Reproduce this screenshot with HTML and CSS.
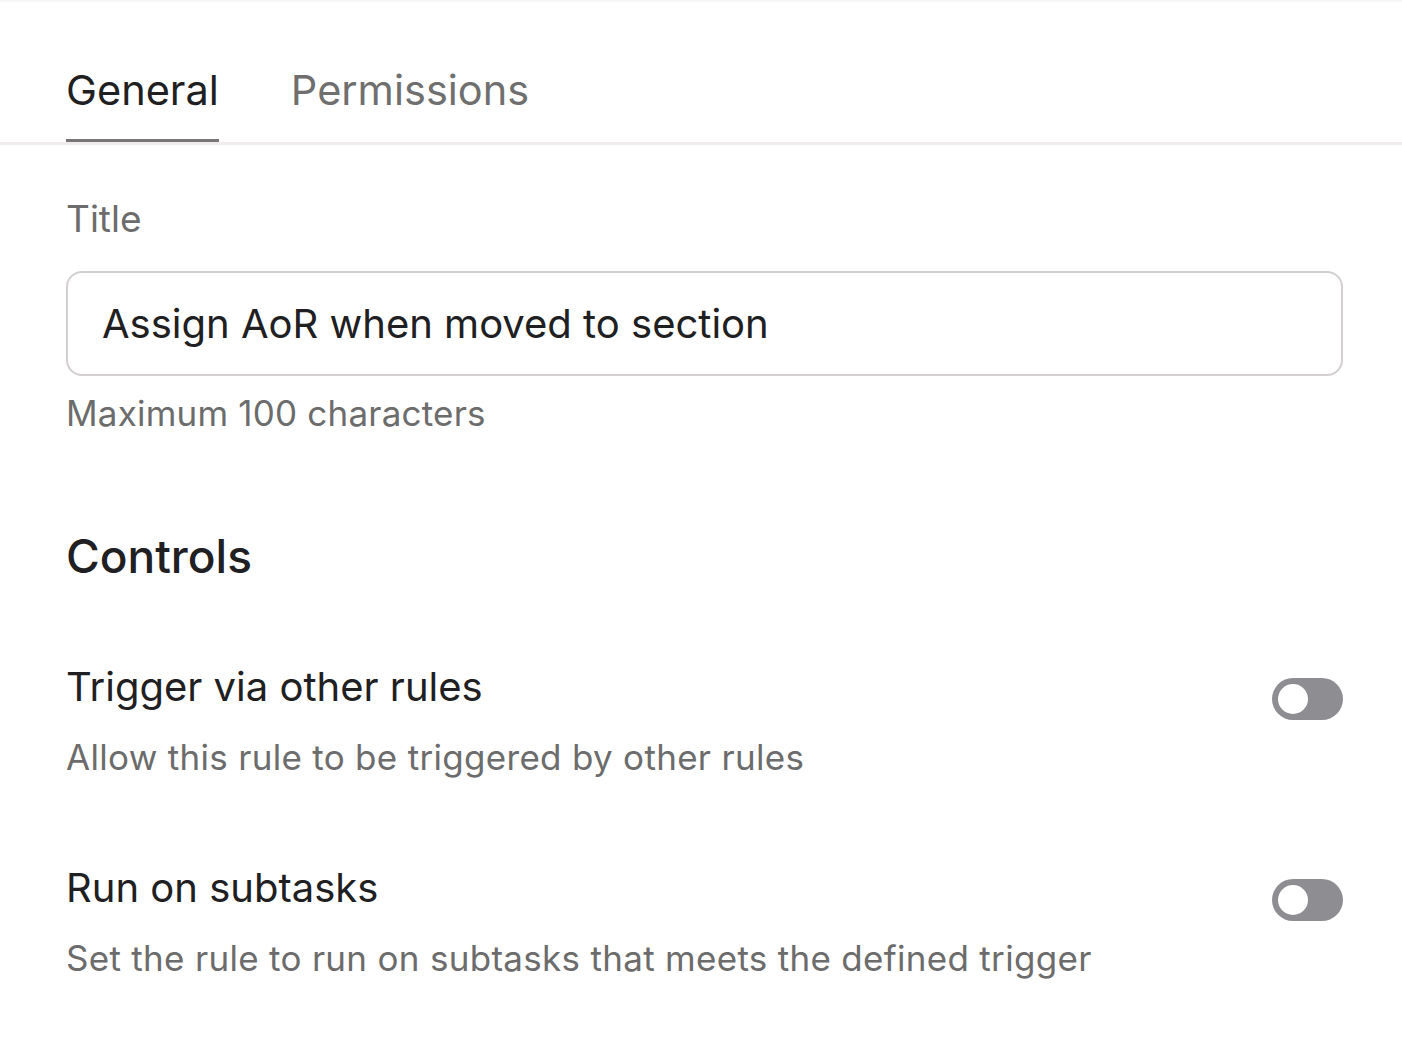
FILE: index.html
```html
<!DOCTYPE html>
<html>
<head>
<meta charset="utf-8">
<link rel="stylesheet" href="styles.css">
</head>
<body>
<div class="topline"></div>
<nav class="tabs">
  <div class="tab active">General</div>
  <div class="tab">Permissions</div>
</nav>
<main class="content">
  <section class="field">
    <label class="label">Title</label>
    <div class="input">Assign AoR when moved to section</div>
    <div class="hint">Maximum 100 characters</div>
  </section>
  <h2 class="heading">Controls</h2>
  <div class="control">
    <div class="control-text">
      <div class="control-title">Trigger via other rules</div>
      <div class="control-desc">Allow this rule to be triggered by other rules</div>
    </div>
    <div class="toggle"><span class="knob"></span></div>
  </div>
  <div class="control">
    <div class="control-text">
      <div class="control-title">Run on subtasks</div>
      <div class="control-desc">Set the rule to run on subtasks that meets the defined trigger</div>
    </div>
    <div class="toggle"><span class="knob"></span></div>
  </div>
</main>
</body>
</html>
```
FILE: styles.css
```css
* { box-sizing: border-box; }
body {
  margin: 0;
  background: #ffffff;
  font-family: "Inter", "Noto Sans", sans-serif;
  color: #202022;
}
.topline {
  height: 2px;
  background: #f6f6f6;
}
.tabs {
  display: flex;
  gap: 72px;
  padding: 0 66px;
  margin-top: 63px;
  border-bottom: 3px solid #efebeb;
}
.tab {
  font-size: 41.5px;
  line-height: 50px;
  padding-bottom: 24px;
  color: #6f6f6f;
  border-bottom: 3px solid transparent;
}
.tab.active {
  color: #202022;
  border-bottom-color: #767676;
}
.content {
  padding: 0 59px 0 66px;
}
.field {
  display: flex;
  flex-direction: column;
  padding-top: 52px;
}
.label {
  font-size: 37px;
  line-height: 44px;
  color: #6c6c6c;
}
.input {
  margin-top: 30px;
  height: 105px;
  border: 2px solid #d3cfcf;
  border-radius: 16px;
  padding: 0 34px;
  display: flex;
  align-items: center;
  font-size: 40px;
  line-height: 48px;
}
.hint {
  margin-top: 16px;
  font-size: 35px;
  line-height: 42px;
  letter-spacing: 0.2px;
  color: #6c6c6c;
}
.heading {
  margin: 95px 0 0;
  font-size: 46px;
  line-height: 54px;
  font-weight: 500;
}
.control {
  display: flex;
  align-items: flex-start;
  justify-content: space-between;
  margin-top: 80px;
}
.control + .control {
  margin-top: 86px;
}
.control-title {
  font-size: 40px;
  line-height: 48px;
}
.control-desc {
  margin-top: 25px;
  font-size: 35px;
  line-height: 42px;
  letter-spacing: 0.3px;
  color: #6c6c6c;
}
.toggle {
  flex: none;
  width: 71px;
  height: 42px;
  border-radius: 21px;
  background: #8e8d92;
  margin-top: 15px;
  padding: 6px;
  display: flex;
  align-items: center;
}
.knob {
  width: 30px;
  height: 30px;
  border-radius: 50%;
  background: #ffffff;
}
```
